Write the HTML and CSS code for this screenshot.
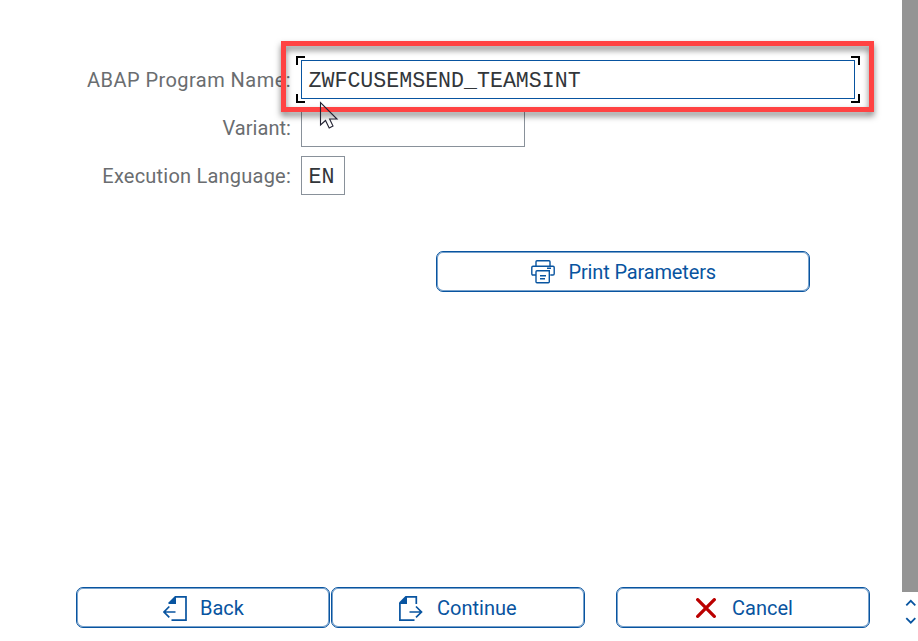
FILE: index.html
```
<!DOCTYPE html>
<html lang="en">
<head>
<meta charset="utf-8">
<title>ABAP Program</title>
<link rel="stylesheet" href="styles.css">
</head>
<body>
<div class="window">
  <main class="panel">
    <div class="form">
      <div class="label"><span class="label-program">ABAP Program Name:</span></div>
      <div class="field field-program">ZWFCUSEMSEND_TEAMSINT
        <i class="corner tl"></i><i class="corner tr"></i><i class="corner bl"></i><i class="corner br"></i>
      </div>
      <div class="label"><span class="label-variant">Variant:</span></div>
      <div class="field field-variant"></div>
      <div class="label"><span class="label-language">Execution Language:</span></div>
      <div class="field field-language">EN</div>
    </div>
    <div class="button print">
      <svg width="24" height="24" viewBox="0 0 24 24" fill="none" stroke="#0854a0" stroke-width="1.4">
        <path d="M5 6V1.700Q5 .8 6 .8H18Q19 .8 19 1.700V6M4.700 15H2Q.8 15 .8 13.700V7.500Q.8 6.300 2 6.300H22Q23.200 6.300 23.200 7.500V13.700Q23.200 15 22 15H19.300M6 10.800H18.300V21.700Q18.300 22.700 17.300 22.700H6Q5 22.700 5 21.700V11.800Q5 10.800 6 10.800M9 15.700H15M9 18.700H14M16 8.300H20"/>
      </svg>
      <span class="text-print">Print Parameters</span>
    </div>
    <div class="footer">
      <div class="button back">
        <svg width="24" height="25" viewBox="0 0 24 25" fill="none" stroke="#0854a0" stroke-width="1.7">
          <path d="M12 .9H23V24.100H8.500M1 16H12.500M6.300 10.500L1 16L6.300 21.300"/>
          <path fill="#0854a0" stroke="none" d="M12 0H13V8H5.500V6.500Z"/>
        </svg>
        <span class="text-back">Back</span>
      </div>
      <div class="button continue">
        <svg width="24" height="25" viewBox="0 0 24 25" fill="none" stroke="#0854a0" stroke-width="1.7">
          <path d="M7 .9H17.300V8M.9 7V24.100H15.500M10.500 16H22.500M17 10.500L22.500 16L17 21.300"/>
          <path fill="#0854a0" stroke="none" d="M6.500 0H8V8H0V6.500Z"/>
        </svg>
        <span class="text-continue">Continue</span>
      </div>
      <div class="button cancel">
        <svg width="20" height="20" viewBox="0 0 20 20" stroke="#bb0000" stroke-width="3.300" stroke-linecap="round">
          <path d="M1.700 1.700L18.300 18.300M18.300 1.700L1.700 18.300"/>
        </svg>
        <span class="text-cancel">Cancel</span>
      </div>
    </div>
  </main>
  <aside class="scrollbar">
    <div class="thumb"></div>
    <svg width="16" height="49" viewBox="0 0 16 49" fill="none" stroke="#0854a0" stroke-width="1.800">
      <path d="M4.300 13.300L8.800 8.800L13.300 13.300M4.300 26.200L8.800 30.700L13.300 26.200"/>
    </svg>
  </aside>
</div>
<div class="highlight"></div>
<svg class="pointer" width="20" height="30" viewBox="0 0 20 30" fill="none" stroke-linejoin="miter">
  <path d="M1.500 1.500V24L6.500 19.500L10.200 27L14 25L10.600 18H18Z" stroke="#222232" stroke-width="1.100"/>
</svg>
</body>
</html>
```
FILE: styles.css
```
* { box-sizing: border-box; }
body {
  margin: 0;
  background: #fff;
  font-family: Roboto, "Liberation Sans", sans-serif;
  font-size: 20px;
  overflow: hidden;
}
.window { display: flex; width: 918px; height: 641px; }
.panel {
  width: 902px;
  display: flex;
  flex-direction: column;
  padding: 60px 32px 13px 76px;
}
.form {
  display: grid;
  grid-template-columns: 215px 554px;
  grid-auto-rows: 39px;
  column-gap: 10px;
  row-gap: 9px;
}
.label { display: flex; align-items: center; justify-content: flex-end; color: #6a6d70; white-space: nowrap; }
.label span { padding-top: 1px; }
.label-program { letter-spacing: 0.45px; }
.label-variant { letter-spacing: 0.05px; }
.label-language { letter-spacing: 0.22px; }
.field {
  position: relative;
  border: 1px solid #89919a;
  padding-left: 6.5px;
  line-height: 40px;
  font-family: "Liberation Mono", monospace;
  font-size: 21.6px;
  color: #32363a;
}
.field-program { border-color: #0854a0; }
.field-variant { width: 224px; }
.field-language { width: 44px; }
.corner { position: absolute; width: 9px; height: 9px; border: 0 solid #000; }
.tl { left: -6px; top: -5px; border-width: 2px 0 0 2px; }
.tr { right: -6px; top: -5px; border-width: 2px 2px 0 0; }
.bl { left: -6px; bottom: -5px; border-width: 0 0 2px 2px; }
.br { right: -6px; bottom: -5px; border-width: 0 2px 2px 0; }
.button {
  display: flex;
  align-items: center;
  width: 254px;
  height: 41px;
  border: 1px solid #0854a0;
  border-radius: 7px;
  box-shadow: inset 0 0 0 1px rgba(8, 84, 160, 0.55);
  color: #0854a0;
  white-space: nowrap;
}
.button svg { flex: none; margin-top: 1px; }
.print { width: 374px; margin: 56px 0 0 360px; padding-left: 94px; gap: 13.5px; }
.footer { display: flex; margin-top: auto; }
.back { padding-left: 86px; gap: 13px; }
.continue { margin-left: 1px; padding-left: 67px; gap: 14px; }
.cancel { margin-left: 31px; padding-left: 79px; gap: 16px; }
.button.cancel svg { margin-top: 0; }
.text-print { letter-spacing: -0.15px; }
.scrollbar { width: 16px; display: flex; flex-direction: column; }
.thumb { height: 592px; background: #949494; }
.highlight {
  position: absolute;
  left: 281px;
  top: 41px;
  width: 593px;
  height: 71px;
  border: 5px solid #ff4343;
  filter: drop-shadow(0 4px 3px rgba(0, 0, 0, 0.5));
}
.pointer { position: absolute; left: 319px; top: 101px; }
```
